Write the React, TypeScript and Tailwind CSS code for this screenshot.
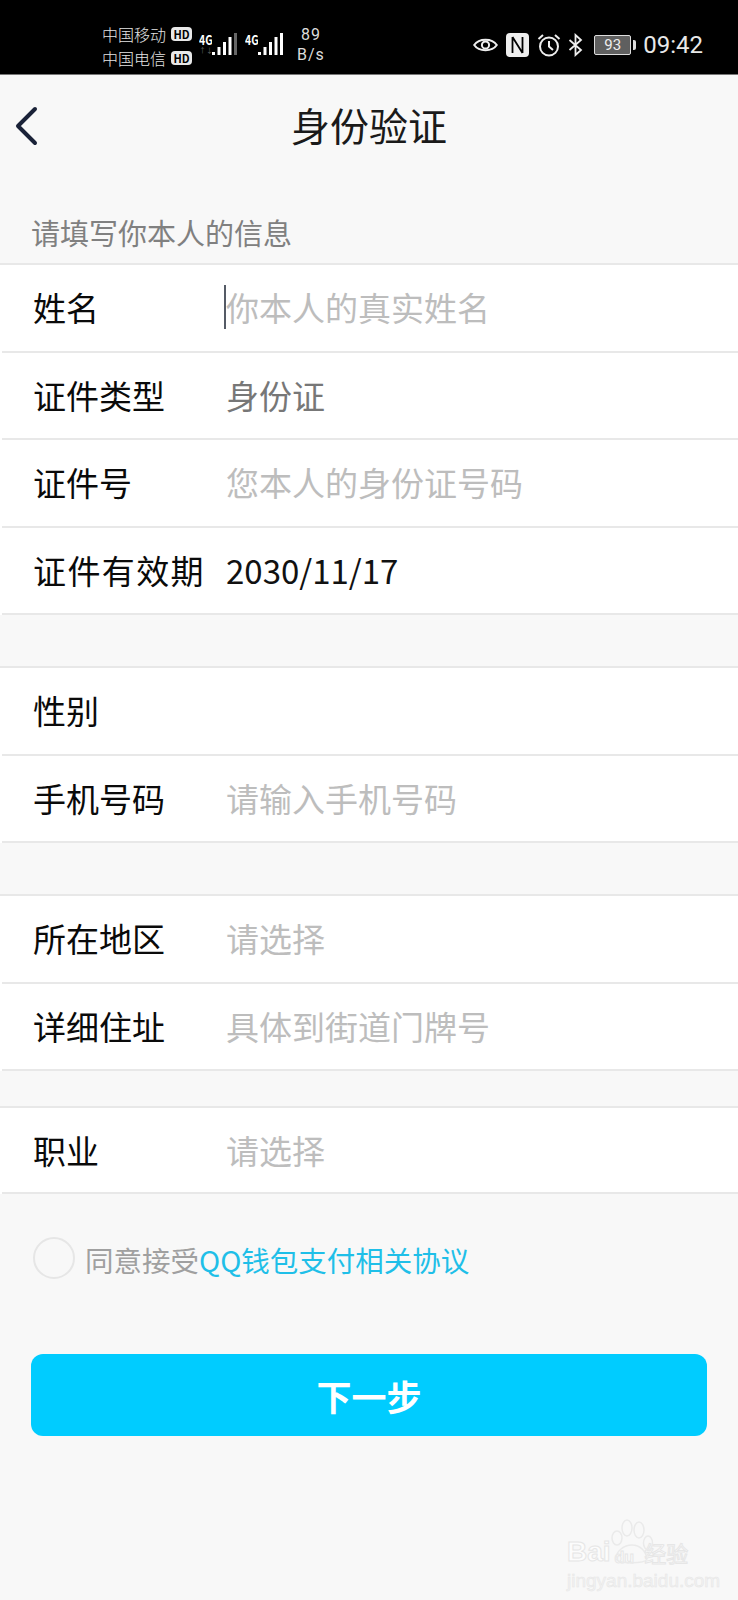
const FONT = "font-['Noto_Sans_CJK_SC','Noto_Sans',sans-serif]";

function Row({ label, value, tone = "ph", caret = false, short = false, wide = false }: { label: string; value?: string; tone?: "ph" | "gray" | "dark"; caret?: boolean; short?: boolean; wide?: boolean }) {
  const color = tone === "ph" ? "text-[#bdbdbd]" : tone === "gray" ? "text-[#777777]" : "text-[#111111]";
  return (
    <div className={"ml-[2px] flex items-center border-b-2 border-[#e8e8e8] " + (short ? "h-[86px]" : "h-[87.5px]")}>
      <div className={"w-[224px] shrink-0 pl-[31px] text-[33px] leading-none text-[#0a0a0a] " + (wide ? "tracking-[1.4px]" : "")}>{label}</div>
      <div className={"relative text-[33px] leading-none " + color}>
        {caret && <span className="absolute left-[-2px] top-[-6px] h-[44px] w-[1.5px] bg-[#555b66]" />}
        {value}
      </div>
    </div>
  );
}

function Group({ children, className = "" }: { children: React.ReactNode; className?: string }) {
  return <div className={"border-t-2 border-[#e8e8e8] bg-white " + className}>{children}</div>;
}

function Bars({ dim = false }: { dim?: boolean }) {
  return (
    <svg width="26" height="24" viewBox="0 0 26 24" fill="#fff">
      <rect x="0" y="19" width="3" height="3" />
      <rect x="5.500" y="14" width="3" height="8" />
      <rect x="11" y="9" width="3" height="13" />
      <rect x="16.500" y="4" width="3" height="18" />
      <rect x="22" y="0" width="3" height="22" fill={dim ? "#666" : "#fff"} />
    </svg>
  );
}

function Hd() {
  return <span className="ml-[5px] inline-flex h-[14px] w-[21px] items-center justify-center rounded-[4px] bg-[#e8e8e8] text-[11px] font-bold leading-none text-black">HD</span>;
}

function StatusBar() {
  return (
    <div className="flex h-[75px] items-center border-b border-[#777] bg-black pl-[102px] pr-[35px] text-white">
      <div className="flex flex-col gap-[3px] pt-[18px] text-[16px] font-light leading-[21px] text-[#e4e4e4]">
        <div className="flex items-center">中国移动<Hd /></div>
        <div className="flex items-center">中国电信<Hd /></div>
      </div>
      <div className="ml-[7px] mt-[16px] flex items-start">
        <div className="relative h-[24px] w-[13px] overflow-hidden"><span className="absolute left-0 top-0 origin-top-left scale-x-[0.8] text-[13px] font-bold leading-none">4G</span><span className="absolute left-0 top-[14px] text-[7px] leading-none text-[#666]">↑↓</span></div>
        <Bars dim />
      </div>
      <div className="ml-[7px] mt-[16px] flex items-start">
        <div className="relative h-[24px] w-[13px] overflow-hidden"><span className="absolute left-0 top-0 origin-top-left scale-x-[0.8] text-[13px] font-bold leading-none">4G</span></div>
        <Bars />
      </div>
      <div className="ml-[13px] mt-[16px] flex flex-col items-center text-[16px] leading-[20px] tracking-[1px] text-[#dddddd] font-['Roboto',sans-serif]">
        <span>89</span><span>B/s</span>
      </div>
      <div className="ml-auto mt-[16px] flex items-center">
        <svg width="25" height="16" viewBox="0 0 25 16" fill="none" stroke="#eee" strokeWidth="2"><path d="M1.200 8C6 1 19 1 23.800 8C19 15 6 15 1.200 8Z" /><circle cx="12.500" cy="8" r="3.600" /></svg>
        <svg className="ml-[8px]" width="23" height="24" viewBox="0 0 23 24"><rect width="23" height="24" rx="4" fill="#eee" /><path d="M6.500 4V20M6.500 4L16.500 20M16.500 4V20" stroke="#000" strokeWidth="1.800" fill="none" /><path d="M3 0V24M20 0V24" stroke="#000" strokeWidth="0" /></svg>
        <svg className="ml-[8px]" width="24" height="24" viewBox="0 0 24 24" fill="none" stroke="#eee" strokeWidth="2"><circle cx="12" cy="13.500" r="9" /><path d="M12 8V13.500L16 17M1.500 6L6 2M22.500 6L18 2" /></svg>
        <svg className="ml-[7px]" width="15" height="24" viewBox="0 0 15 24" fill="none" stroke="#eee" strokeWidth="1.800"><path d="M1.500 7L13 17L7.500 22V2L13 7L1.500 17" /></svg>
        <div className="ml-[11px] flex items-center">
          <div className="flex h-[20px] w-[37px] items-center justify-center rounded-[2px] border border-[#ddd] bg-[#5f5f5f] text-[15px] leading-none text-[#eee] font-['Roboto',sans-serif]">93</div>
          <span className="ml-[2px] h-[10px] w-[3px] rounded-r-[2px] bg-[#ddd]" />
        </div>
        <span className="ml-[7px] text-[24px] leading-none text-[#e8e8e8] font-['Roboto',sans-serif]">09:42</span>
      </div>
    </div>
  );
}

function Watermark() {
  return (
    <div className="pointer-events-none absolute left-[567px] top-[1519px] w-[135px] text-[#fcfcfc]">
      <svg className="absolute left-[43px] top-0" width="44" height="46" viewBox="0 0 44 46" fill="none" stroke="#eaeaea" strokeWidth="1.500">
        <ellipse cx="7" cy="19" rx="5" ry="7" />
        <ellipse cx="17" cy="9" rx="5" ry="8" />
        <ellipse cx="29" cy="11" rx="5" ry="8" />
        <ellipse cx="38" cy="24" rx="4.500" ry="7" />
        <path d="M6 40C6 32 14 26 22 26C30 26 36 32 37 40C35 45 8 45 6 40Z" />
      </svg>
      <div className="flex items-end pt-[19px] [-webkit-text-stroke:1px_#e6e6e6] font-['Liberation_Sans','Noto_Sans_CJK_SC',sans-serif]">
        <span className="text-[28px] font-bold leading-none">Bai</span>
        <span className="ml-[4px] text-[16px] font-bold leading-none">du</span>
        <span className="ml-[10px] text-[22px] leading-none">经验</span>
      </div>
      <div className="mt-[5px] text-[19px] leading-none text-[#f2f2f2] [-webkit-text-stroke:0.5px_#e6e6e6] font-['Liberation_Sans',sans-serif]">jingyan.baidu.com</div>
    </div>
  );
}

export default function App() {
  return (
    <div className={"relative h-[1600px] w-[738px] overflow-hidden bg-[#f8f8f8] " + FONT}>
      <StatusBar />
      <div className="relative flex h-[105px] items-center justify-center pb-[6px]">
        <svg className="absolute left-[15px] top-[31px]" width="24" height="40" viewBox="0 0 24 40" fill="none" stroke="#1a2238" strokeWidth="4" strokeLinecap="round" strokeLinejoin="round"><path d="M20 3L3 20L20 37" /></svg>
        <span className="text-[39px] leading-none text-[#1a1a1a]">身份验证</span>
      </div>
      <div className="flex h-[83px] items-end pb-[16px] pl-[31px] text-[29px] leading-none text-[#808080]">请填写你本人的信息</div>
      <Group>
        <Row label="姓名" value="你本人的真实姓名" caret />
        <Row label="证件类型" value="身份证" tone="gray" />
        <Row label="证件号" value="您本人的身份证号码" />
        <Row label="证件有效期" value="2030/11/17" tone="dark" wide />
      </Group>
      <Group className="mt-[51px]">
        <Row label="性别" />
        <Row label="手机号码" value="请输入手机号码" />
      </Group>
      <Group className="mt-[51px]">
        <Row label="所在地区" value="请选择" />
        <Row label="详细住址" value="具体到街道门牌号" />
      </Group>
      <Group className="mt-[35px]">
        <Row label="职业" value="请选择" short />
      </Group>
      <div className="ml-[33px] mt-[43px] flex items-center">
        <span className="h-[42px] w-[42px] rounded-full border-2 border-[#e6e6e6]" />
        <span className="ml-[10px] mt-[5px] text-[28.5px] leading-none text-[#a0a0a0]">同意接受<span className="text-[#1fbfe8]">QQ钱包支付相关协议</span></span>
      </div>
      <div className="mx-[31px] mt-[75px] flex h-[82px] items-center justify-center rounded-[12px] bg-[#00ccff] text-[35px] font-bold leading-none text-white">下一步</div>
      <Watermark />
    </div>
  );
}
